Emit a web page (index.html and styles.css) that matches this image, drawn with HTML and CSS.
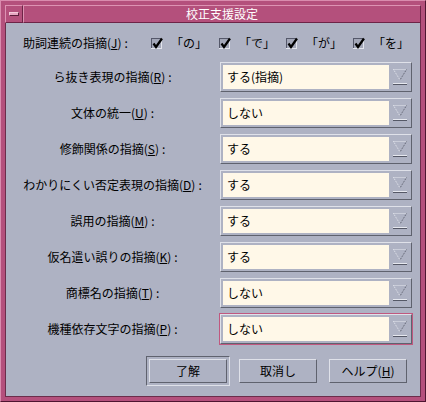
FILE: index.html
```html
<!DOCTYPE html>
<html lang="ja">
<head>
<meta charset="utf-8">
<title>校正支援設定</title>
<link rel="stylesheet" href="styles.css">
</head>
<body>
<div class="window">
  <div class="titlebar">
    <div class="menubtn"><span class="menubar"></span></div>
    <div class="title">校正支援設定</div>
  </div>
  <div class="content">
    <div class="checkrow">
      <div class="checklabel">助詞連続の指摘(<u>J</u>)<span class="colon">:</span></div>
      <div class="opt opt-first">
        <svg class="cb" width="14" height="13" viewBox="0 0 14 13"><rect x="0" y="1" width="11" height="11" fill="#a3a7b8"/><path d="M0 1.5H11M0.5 1V12" stroke="#55586a" fill="none"/><path d="M0 11.5H11M10.5 1V12" stroke="#e2e4ec" fill="none"/><path d="M2.5 6.5L5 10L11 1.5" stroke="#000" stroke-width="2.2" fill="none"/></svg>
        <span class="q">「の」</span>
      </div>
      <div class="opt">
        <svg class="cb" width="14" height="13" viewBox="0 0 14 13"><rect x="0" y="1" width="11" height="11" fill="#a3a7b8"/><path d="M0 1.5H11M0.5 1V12" stroke="#55586a" fill="none"/><path d="M0 11.5H11M10.5 1V12" stroke="#e2e4ec" fill="none"/><path d="M2.5 6.5L5 10L11 1.5" stroke="#000" stroke-width="2.2" fill="none"/></svg>
        <span class="q">「で」</span>
      </div>
      <div class="opt">
        <svg class="cb" width="14" height="13" viewBox="0 0 14 13"><rect x="0" y="1" width="11" height="11" fill="#a3a7b8"/><path d="M0 1.5H11M0.5 1V12" stroke="#55586a" fill="none"/><path d="M0 11.5H11M10.5 1V12" stroke="#e2e4ec" fill="none"/><path d="M2.5 6.5L5 10L11 1.5" stroke="#000" stroke-width="2.2" fill="none"/></svg>
        <span class="q">「が」</span>
      </div>
      <div class="opt">
        <svg class="cb" width="14" height="13" viewBox="0 0 14 13"><rect x="0" y="1" width="11" height="11" fill="#a3a7b8"/><path d="M0 1.5H11M0.5 1V12" stroke="#55586a" fill="none"/><path d="M0 11.5H11M10.5 1V12" stroke="#e2e4ec" fill="none"/><path d="M2.5 6.5L5 10L11 1.5" stroke="#000" stroke-width="2.2" fill="none"/></svg>
        <span class="q">「を」</span>
      </div>
    </div>

    <div class="rows">
      <div class="row">
        <div class="label">ら抜き表現の指摘(<u>R</u>)<span class="colon">:</span></div>
        <div class="ring"><div class="combo"><div class="field">する(指摘)</div><div class="arrow"><svg width="14" height="16" viewBox="0 0 14 16"><path d="M0.5 0.5H13.5" stroke="#e6e8ef" stroke-dasharray="1 1" fill="none"/><path d="M0.5 0.5L7 11" stroke="#e6e8ef" stroke-dasharray="1 1" fill="none"/><path d="M13.5 0.5L7 11" stroke="#555866" stroke-dasharray="1 1" fill="none"/><path d="M0 14.5H14" stroke="#e6e8ef"/><path d="M0 15.5H14" stroke="#555866"/></svg></div></div></div>
      </div>
      <div class="row">
        <div class="label">文体の統一(<u>U</u>)<span class="colon">:</span></div>
        <div class="ring"><div class="combo"><div class="field">しない</div><div class="arrow"><svg width="14" height="16" viewBox="0 0 14 16"><path d="M0.5 0.5H13.5" stroke="#e6e8ef" stroke-dasharray="1 1" fill="none"/><path d="M0.5 0.5L7 11" stroke="#e6e8ef" stroke-dasharray="1 1" fill="none"/><path d="M13.5 0.5L7 11" stroke="#555866" stroke-dasharray="1 1" fill="none"/><path d="M0 14.5H14" stroke="#e6e8ef"/><path d="M0 15.5H14" stroke="#555866"/></svg></div></div></div>
      </div>
      <div class="row">
        <div class="label">修飾関係の指摘(<u>S</u>)<span class="colon">:</span></div>
        <div class="ring"><div class="combo"><div class="field">する</div><div class="arrow"><svg width="14" height="16" viewBox="0 0 14 16"><path d="M0.5 0.5H13.5" stroke="#e6e8ef" stroke-dasharray="1 1" fill="none"/><path d="M0.5 0.5L7 11" stroke="#e6e8ef" stroke-dasharray="1 1" fill="none"/><path d="M13.5 0.5L7 11" stroke="#555866" stroke-dasharray="1 1" fill="none"/><path d="M0 14.5H14" stroke="#e6e8ef"/><path d="M0 15.5H14" stroke="#555866"/></svg></div></div></div>
      </div>
      <div class="row">
        <div class="label">わかりにくい否定表現の指摘(<u>D</u>)<span class="colon">:</span></div>
        <div class="ring"><div class="combo"><div class="field">する</div><div class="arrow"><svg width="14" height="16" viewBox="0 0 14 16"><path d="M0.5 0.5H13.5" stroke="#e6e8ef" stroke-dasharray="1 1" fill="none"/><path d="M0.5 0.5L7 11" stroke="#e6e8ef" stroke-dasharray="1 1" fill="none"/><path d="M13.5 0.5L7 11" stroke="#555866" stroke-dasharray="1 1" fill="none"/><path d="M0 14.5H14" stroke="#e6e8ef"/><path d="M0 15.5H14" stroke="#555866"/></svg></div></div></div>
      </div>
      <div class="row">
        <div class="label">誤用の指摘(<u>M</u>)<span class="colon">:</span></div>
        <div class="ring"><div class="combo"><div class="field">する</div><div class="arrow"><svg width="14" height="16" viewBox="0 0 14 16"><path d="M0.5 0.5H13.5" stroke="#e6e8ef" stroke-dasharray="1 1" fill="none"/><path d="M0.5 0.5L7 11" stroke="#e6e8ef" stroke-dasharray="1 1" fill="none"/><path d="M13.5 0.5L7 11" stroke="#555866" stroke-dasharray="1 1" fill="none"/><path d="M0 14.5H14" stroke="#e6e8ef"/><path d="M0 15.5H14" stroke="#555866"/></svg></div></div></div>
      </div>
      <div class="row">
        <div class="label">仮名遣い誤りの指摘(<u>K</u>)<span class="colon">:</span></div>
        <div class="ring"><div class="combo"><div class="field">する</div><div class="arrow"><svg width="14" height="16" viewBox="0 0 14 16"><path d="M0.5 0.5H13.5" stroke="#e6e8ef" stroke-dasharray="1 1" fill="none"/><path d="M0.5 0.5L7 11" stroke="#e6e8ef" stroke-dasharray="1 1" fill="none"/><path d="M13.5 0.5L7 11" stroke="#555866" stroke-dasharray="1 1" fill="none"/><path d="M0 14.5H14" stroke="#e6e8ef"/><path d="M0 15.5H14" stroke="#555866"/></svg></div></div></div>
      </div>
      <div class="row">
        <div class="label">商標名の指摘(<u>T</u>)<span class="colon">:</span></div>
        <div class="ring"><div class="combo"><div class="field">しない</div><div class="arrow"><svg width="14" height="16" viewBox="0 0 14 16"><path d="M0.5 0.5H13.5" stroke="#e6e8ef" stroke-dasharray="1 1" fill="none"/><path d="M0.5 0.5L7 11" stroke="#e6e8ef" stroke-dasharray="1 1" fill="none"/><path d="M13.5 0.5L7 11" stroke="#555866" stroke-dasharray="1 1" fill="none"/><path d="M0 14.5H14" stroke="#e6e8ef"/><path d="M0 15.5H14" stroke="#555866"/></svg></div></div></div>
      </div>
      <div class="row">
        <div class="label">機種依存文字の指摘(<u>P</u>)<span class="colon">:</span></div>
        <div class="ring focus"><div class="combo"><div class="field">しない</div><div class="arrow"><svg width="14" height="16" viewBox="0 0 14 16"><path d="M0.5 0.5H13.5" stroke="#e6e8ef" stroke-dasharray="1 1" fill="none"/><path d="M0.5 0.5L7 11" stroke="#e6e8ef" stroke-dasharray="1 1" fill="none"/><path d="M13.5 0.5L7 11" stroke="#555866" stroke-dasharray="1 1" fill="none"/><path d="M0 14.5H14" stroke="#e6e8ef"/><path d="M0 15.5H14" stroke="#555866"/></svg></div></div></div>
      </div>
    </div>

    <div class="buttons">
      <div class="defring"><button class="btn">了解</button></div>
      <button class="btn btn-cancel">取消し</button>
      <button class="btn">ヘルプ(<u>H</u>)</button>
    </div>
  </div>
</div>
</body>
</html>
```

FILE: styles.css
```css
* {
  box-sizing: border-box;
}

body {
  margin: 0;
  font-family: "Noto Sans CJK JP", "Noto Sans", sans-serif;
  font-size: 12px;
  color: #000;
}

u {
  text-decoration: underline;
  text-underline-offset: 1px;
}

.colon {
  margin-left: 3px;
}

.window {
  width: 426px;
  height: 402px;
  background: #b4507c;
  border: 1px solid;
  border-color: #d98cae #4e1530 #4e1530 #d98cae;
  padding: 4px;
  display: flex;
  flex-direction: column;
}

.titlebar {
  height: 18px;
  display: flex;
  flex: none;
}

.menubtn {
  width: 18px;
  height: 18px;
  border: 1px solid;
  border-color: #dd93b3 #6d2447 #6d2447 #dd93b3;
  padding: 6px 0 0 3px;
}

.menubar {
  display: block;
  width: 10px;
  height: 4px;
  background: #e7a6c2;
  border: 1px solid;
  border-color: #f4cadb #5c1d3b #5c1d3b #f4cadb;
}

.title {
  flex: 1;
  height: 18px;
  border: 1px solid;
  border-color: #dd93b3 #6d2447 #6d2447 #dd93b3;
  color: #fff;
  text-align: center;
  line-height: 16px;
  font-size: 12px;
}

.content {
  flex: 1;
  background: #aeb2c3;
  border: 1px solid #6b2d4b;
  border-top: none;
  padding: 12px 0 10px;
  display: flex;
  flex-direction: column;
}

.checkrow {
  height: 16px;
  display: flex;
  align-items: center;
  padding-left: 17px;
  line-height: 16px;
}

.checklabel {
  width: 130px;
}

.opt {
  width: 68px;
  display: flex;
  align-items: center;
}

.opt-first {
  width: 69px;
}

.cb {
  display: block;
  margin-right: 12px;
}

.q {
  font-feature-settings: "halt";
}

.rows {
  margin-top: 10px;
  display: flex;
  flex-direction: column;
  gap: 4px;
}

.row {
  height: 32px;
  display: flex;
  align-items: center;
}

.label {
  width: 213px;
  text-align: center;
  line-height: 16px;
}

.ring {
  width: 194px;
  height: 32px;
  border: 1px solid transparent;
}

.ring.focus {
  border-color: #c0587f;
}

.combo {
  width: 192px;
  height: 30px;
  border: 1px solid;
  border-color: #dfe1e9 #5f626e #5f626e #dfe1e9;
  padding: 2px;
  display: flex;
}

.field {
  width: 166px;
  height: 24px;
  background: #fff8e8;
  padding-left: 4px;
  line-height: 24px;
}

.arrow {
  flex: 1;
  padding: 4px 0 0 4px;
}

.arrow svg {
  display: block;
}

.buttons {
  margin-top: 11px;
  height: 30px;
  display: flex;
  justify-content: flex-end;
  align-items: center;
  padding-right: 13px;
}

.defring {
  border: 1px solid;
  border-color: #5f626e #dfe1e9 #dfe1e9 #5f626e;
  padding: 2px;
  margin-right: 9px;
}

.btn {
  display: block;
  width: 78px;
  height: 24px;
  background: #aeb2c3;
  border: 1px solid;
  border-color: #dfe1e9 #5f626e #5f626e #dfe1e9;
  padding: 0;
  font-family: inherit;
  font-size: 12px;
  color: #000;
  line-height: 20px;
}

.btn-cancel {
  margin-right: 12px;
}
```
